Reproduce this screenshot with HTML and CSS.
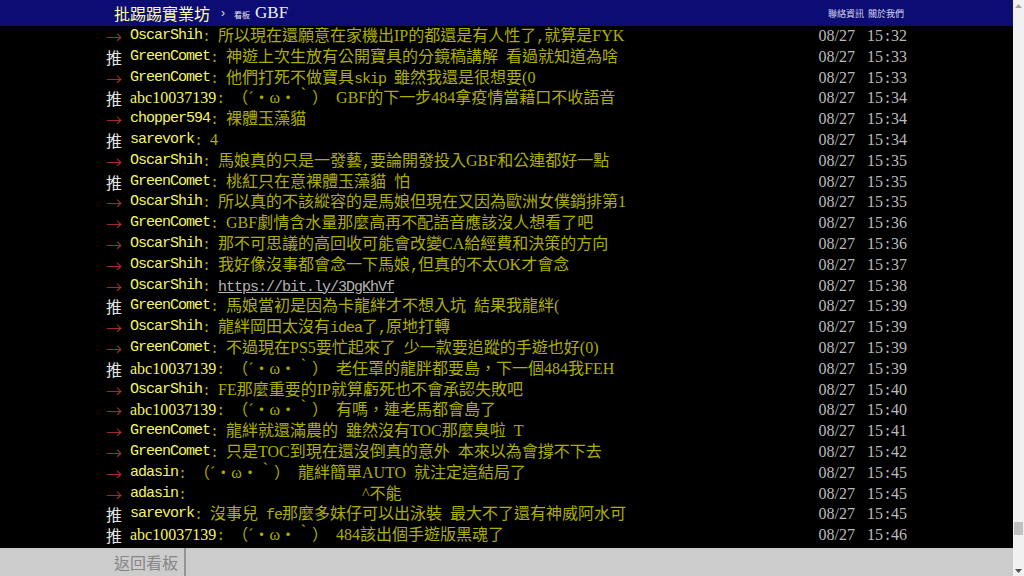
FILE: index.html
```html
<!DOCTYPE html>
<html lang="zh-Hant">
<head>
<meta charset="utf-8">
<title>GBF - 批踢踢實業坊</title>
<link rel="stylesheet" href="styles.css">
</head>
<body>
<div class="window">
  <div class="main">
    <header class="topbar">
      <div class="topbar-inner">
        <span class="logo">批踢踢實業坊</span>
        <span class="chev">›</span>
        <span class="small">看板</span>
        <span class="board-name">GBF</span>
        <span class="links"><span>聯絡資訊</span><span>關於我們</span></span>
      </div>
    </header>
    <section class="feed">
      <div class="board">
        <div class="push"><span class="tag arrow">→</span><span class="uid m">OscarShih</span><span class="txt"><span class="m">: </span>所以現在還願意在家機出IP的都還是有人性了<span class="m">,</span>就算是FYK</span><span class="time">08/27 15<span class="m">:</span>32</span></div>
        <div class="push"><span class="tag">推</span><span class="uid m">GreenComet</span><span class="txt"><span class="m">: </span>神遊上次生放有公開寶具的分鏡稿講解 看過就知道為啥</span><span class="time">08/27 15<span class="m">:</span>33</span></div>
        <div class="push"><span class="tag arrow">→</span><span class="uid m">GreenComet</span><span class="txt"><span class="m">: </span>他們打死不做寶具<span class="m">skip</span> 雖然我還是很想要(0</span><span class="time">08/27 15<span class="m">:</span>33</span></div>
        <div class="push"><span class="tag">推</span><span class="uid">abc10037139</span><span class="txt"><span class="m">: </span>（´・ω・｀） GBF的下一步484拿疫情當藉口不收語音</span><span class="time">08/27 15<span class="m">:</span>34</span></div>
        <div class="push"><span class="tag arrow">→</span><span class="uid m">chopper594</span><span class="txt"><span class="m">: </span>裸體玉藻貓</span><span class="time">08/27 15<span class="m">:</span>34</span></div>
        <div class="push"><span class="tag">推</span><span class="uid m">sarevork</span><span class="txt"><span class="m">: </span>4</span><span class="time">08/27 15<span class="m">:</span>34</span></div>
        <div class="push"><span class="tag arrow">→</span><span class="uid m">OscarShih</span><span class="txt"><span class="m">: </span>馬娘真的只是一發藝<span class="m">,</span>要論開發投入GBF和公連都好一點</span><span class="time">08/27 15<span class="m">:</span>35</span></div>
        <div class="push"><span class="tag">推</span><span class="uid m">GreenComet</span><span class="txt"><span class="m">: </span>桃紅只在意裸體玉藻貓 怕</span><span class="time">08/27 15<span class="m">:</span>35</span></div>
        <div class="push"><span class="tag arrow">→</span><span class="uid m">OscarShih</span><span class="txt"><span class="m">: </span>所以真的不該縱容的是馬娘但現在又因為歐洲女僕銷排第1</span><span class="time">08/27 15<span class="m">:</span>35</span></div>
        <div class="push"><span class="tag arrow">→</span><span class="uid m">GreenComet</span><span class="txt"><span class="m">: </span>GBF劇情含水量那麼高再不配語音應該沒人想看了吧</span><span class="time">08/27 15<span class="m">:</span>36</span></div>
        <div class="push"><span class="tag arrow">→</span><span class="uid m">OscarShih</span><span class="txt"><span class="m">: </span>那不可思議的高回收可能會改變CA給經費和決策的方向</span><span class="time">08/27 15<span class="m">:</span>36</span></div>
        <div class="push"><span class="tag arrow">→</span><span class="uid m">OscarShih</span><span class="txt"><span class="m">: </span>我好像沒事都會念一下馬娘<span class="m">,</span>但真的不太OK才會念</span><span class="time">08/27 15<span class="m">:</span>37</span></div>
        <div class="push"><span class="tag arrow">→</span><span class="uid m">OscarShih</span><span class="txt"><span class="m">: </span><a class="link m" href="#">https://bit.ly/3DgKhVf</a></span><span class="time">08/27 15<span class="m">:</span>38</span></div>
        <div class="push"><span class="tag">推</span><span class="uid m">GreenComet</span><span class="txt"><span class="m">: </span>馬娘當初是因為卡龍絆才不想入坑 結果我龍絆(</span><span class="time">08/27 15<span class="m">:</span>39</span></div>
        <div class="push"><span class="tag arrow">→</span><span class="uid m">OscarShih</span><span class="txt"><span class="m">: </span>龍絆岡田太沒有<span class="m">idea</span>了<span class="m">,</span>原地打轉</span><span class="time">08/27 15<span class="m">:</span>39</span></div>
        <div class="push"><span class="tag arrow">→</span><span class="uid m">GreenComet</span><span class="txt"><span class="m">: </span>不過現在PS5要忙起來了 少一款要追蹤的手遊也好(0)</span><span class="time">08/27 15<span class="m">:</span>39</span></div>
        <div class="push"><span class="tag">推</span><span class="uid">abc10037139</span><span class="txt"><span class="m">: </span>（´・ω・｀） 老任罩的龍胖都要島，下一個484我FEH</span><span class="time">08/27 15<span class="m">:</span>39</span></div>
        <div class="push"><span class="tag arrow">→</span><span class="uid m">OscarShih</span><span class="txt"><span class="m">: </span>FE那麼重要的IP就算虧死也不會承認失敗吧</span><span class="time">08/27 15<span class="m">:</span>40</span></div>
        <div class="push"><span class="tag arrow">→</span><span class="uid">abc10037139</span><span class="txt"><span class="m">: </span>（´・ω・｀） 有嗎，連老馬都會島了</span><span class="time">08/27 15<span class="m">:</span>40</span></div>
        <div class="push"><span class="tag arrow">→</span><span class="uid m">GreenComet</span><span class="txt"><span class="m">: </span>龍絆就還滿農的 雖然沒有TOC那麼臭啦 T</span><span class="time">08/27 15<span class="m">:</span>41</span></div>
        <div class="push"><span class="tag arrow">→</span><span class="uid m">GreenComet</span><span class="txt"><span class="m">: </span>只是TOC到現在還沒倒真的意外 本來以為會撐不下去</span><span class="time">08/27 15<span class="m">:</span>42</span></div>
        <div class="push"><span class="tag arrow">→</span><span class="uid m">adasin</span><span class="txt"><span class="m">: </span>（´・ω・｀） 龍絆簡單AUTO 就注定這結局了</span><span class="time">08/27 15<span class="m">:</span>45</span></div>
        <div class="push"><span class="tag arrow">→</span><span class="uid m">adasin</span><span class="txt"><span class="m">:                      </span>^不能</span><span class="time">08/27 15<span class="m">:</span>45</span></div>
        <div class="push"><span class="tag">推</span><span class="uid m">sarevork</span><span class="txt"><span class="m">: </span>沒事兒 <span class="m">fe</span>那麼多妹仔可以出泳裝 最大不了還有神威阿水可</span><span class="time">08/27 15<span class="m">:</span>45</span></div>
        <div class="push"><span class="tag">推</span><span class="uid">abc10037139</span><span class="txt"><span class="m">: </span>（´・ω・｀） 484該出個手遊版黑魂了</span><span class="time">08/27 15<span class="m">:</span>46</span></div>
      </div>
    </section>
    <nav class="nav">
      <div class="nav-inner">
        <a class="nav-btn" href="#">返回看板</a>
      </div>
    </nav>
  </div>
  <div class="scrollbar">
    <div class="sb-btn">
      <svg width="7" height="4" viewBox="0 0 7 4"><polygon points="0,4 7,4 3.5,0" fill="#a3a3a3"/></svg>
    </div>
    <div class="sb-track"><div class="sb-thumb"></div></div>
    <div class="sb-btn">
      <svg width="7" height="4" viewBox="0 0 7 4"><polygon points="0,0 7,0 3.5,4" fill="#505050"/></svg>
    </div>
  </div>
</div>
</body>
</html>
```

FILE: styles.css
```css
html, body {
  margin: 0;
  padding: 0;
  height: 100%;
  overflow: hidden;
  background: #000;
}

.window {
  display: flex;
  width: 1024px;
  height: 576px;
}

.main {
  flex: 1;
  display: flex;
  flex-direction: column;
  min-width: 0;
}

/* top bar */
.topbar {
  height: 26px;
  flex: none;
  background: #0c0c74;
}

.topbar-inner {
  margin-left: 106px;
  width: 801px;
  height: 26px;
  box-sizing: border-box;
  padding: 0 3px 0 8px;
  display: flex;
  align-items: center;
  white-space: nowrap;
}

.logo {
  font-family: "Noto Sans CJK TC", sans-serif;
  font-size: 16px;
  color: #ffffa8;
  line-height: 20px;
}

.chev {
  margin-left: 11px;
  font-family: "Liberation Sans", sans-serif;
  font-size: 12px;
  color: #e0e0e0;
}

.small {
  margin-left: 9px;
  font-family: "Noto Sans CJK TC", sans-serif;
  font-size: 8px;
  color: #e8e8e8;
  padding-top: 2px;
}

.board-name {
  margin-left: 5px;
  font-family: "Liberation Serif", serif;
  font-size: 17px;
  color: #f0f0f0;
}

.links {
  margin-left: auto;
  display: flex;
  gap: 4px;
  font-family: "Noto Sans CJK TC", sans-serif;
  font-size: 9px;
  color: #d8d8ee;
}

/* feed */
.feed {
  flex: 1;
  overflow: hidden;
  background: #000;
}

.board {
  margin-left: 106px;
  width: 801px;
}

.push {
  display: flex;
  height: 20.8px;
  line-height: 20.8px;
  font-family: "Liberation Serif", "Noto Sans CJK TC", serif;
  font-size: 16px;
  white-space: pre;
  word-spacing: 4px;
}

.push > span {
  flex: none;
}

.m {
  font-family: "Liberation Mono", "Noto Sans CJK TC", monospace;
  font-size: 15px;
  letter-spacing: -1px;
  word-spacing: 0;
}

.tag {
  width: 24px;
  font-family: "Noto Sans CJK TC", sans-serif;
  color: #e6e6e6;
}

.tag.arrow {
  font-weight: 300;
  color: #b8363a;
}

.uid {
  color: #f4f466;
}

.txt {
  color: #aeae00;
}

.link {
  color: #b4b4b4;
  text-decoration: underline;
}

.time {
  margin-left: auto;
  color: #bbbbbb;
  word-spacing: 8px;
}

/* bottom navigation */
.nav {
  height: 28px;
  flex: none;
  background: #cccccc;
}

.nav-inner {
  margin-left: 106px;
  height: 28px;
  display: flex;
}

.nav-btn {
  display: block;
  padding: 0 6px 0 8px;
  border-right: 2px solid #959595;
  font-family: "Noto Sans CJK TC", sans-serif;
  font-size: 16px;
  line-height: 28px;
  color: #868686;
  text-decoration: none;
}

/* scrollbar */
.scrollbar {
  width: 11px;
  flex: none;
  background: #f1f1f1;
  display: flex;
  flex-direction: column;
}

.sb-btn {
  height: 11px;
  display: flex;
  align-items: center;
  justify-content: center;
}

.sb-track {
  flex: 1;
  display: flex;
  flex-direction: column;
  justify-content: flex-end;
  align-items: center;
  padding-bottom: 30px;
}

.sb-thumb {
  width: 9px;
  height: 13px;
  background: #c1c1c1;
}
```
